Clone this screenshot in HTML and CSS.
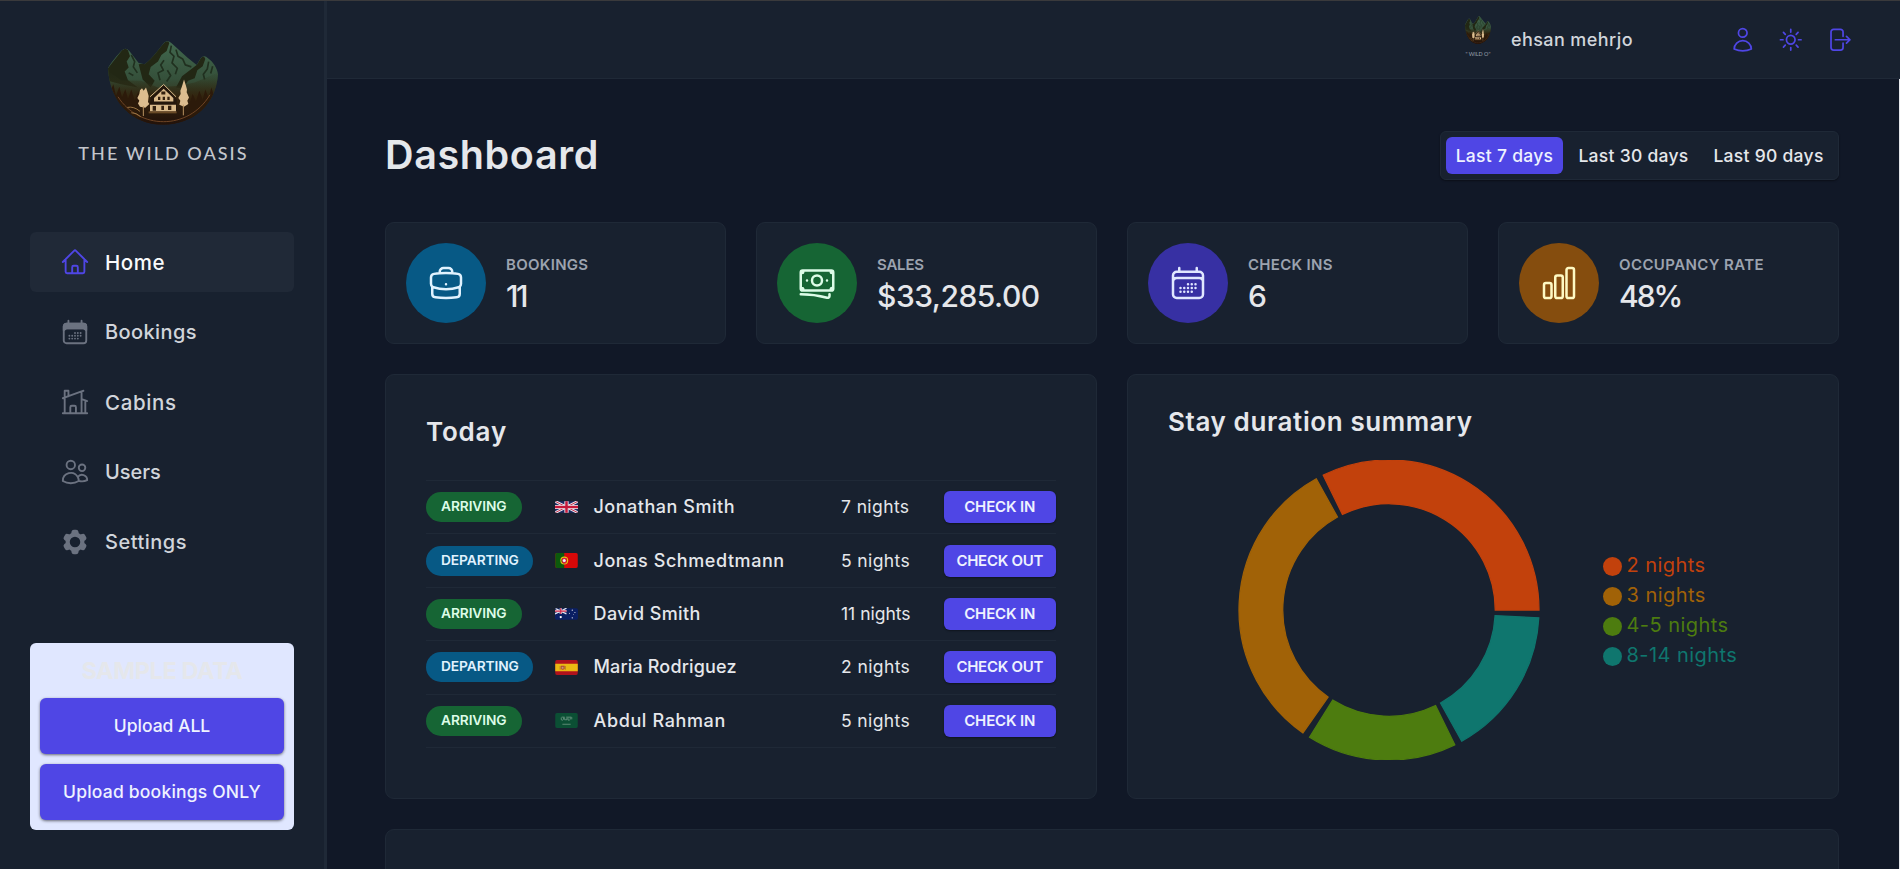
FILE: index.html
```html
<!DOCTYPE html>
<html lang="en">
<head>
<meta charset="utf-8">
<title>The Wild Oasis</title>
<link rel="stylesheet" href="styles.css">
</head>
<body>
<svg class="defs" aria-hidden="true">
  <defs>
    <linearGradient id="slope" x1="0" y1="0" x2="0" y2="1">
      <stop offset="0" stop-color="#41684f"/><stop offset=".45" stop-color="#35503a"/><stop offset=".75" stop-color="#33260f"/><stop offset="1" stop-color="#2a1408"/>
    </linearGradient>
    <linearGradient id="ground" x1="0" y1="0" x2="0" y2="1">
      <stop offset="0" stop-color="#2b3a22" stop-opacity="0"/><stop offset=".5" stop-color="#33220d"/><stop offset="1" stop-color="#22120a"/>
    </linearGradient>
    <clipPath id="bowl"><path d="M0 82C5 70 30 40 42 28Q53 18 64 30L92 66L110 70C135 52 155 20 170 4Q180-4 190 6L238 50L266 72L278 52Q288 40 300 52C315 62 328 82 330 100C325 190 255 252 165 252C75 252 5 185 0 82Z"/></clipPath>
    <symbol id="i-calendar" viewBox="0 0 24 24"><path d="M6.75 3v2.25M17.25 3v2.25M3 18.75V7.5a2.25 2.25 0 012.25-2.25h13.5A2.25 2.25 0 0121 7.5v11.25m-18 0A2.25 2.25 0 005.25 21h13.5A2.25 2.25 0 0021 18.75m-18 0v-7.5A2.25 2.25 0 015.25 9h13.5A2.25 2.25 0 0121 11.25v7.5m-9-6h.008v.008H12v-.008zM12 15h.008v.008H12V15zm0 2.25h.008v.008H12v-.008zM9.75 15h.008v.008H9.75V15zm0 2.25h.008v.008H9.75v-.008zM7.5 15h.008v.008H7.5V15zm0 2.25h.008v.008H7.5v-.008zm6.75-4.5h.008v.008h-.008v-.008zm0 2.25h.008v.008h-.008V15zm0 2.25h.008v.008h-.008v-.008zm2.25-4.5h.008v.008H16.5v-.008zm0 2.25h.008v.008H16.5V15z"/></symbol>
    <symbol id="art" viewBox="0 0 330 253" preserveAspectRatio="none">
      <g clip-path="url(#bowl)">
        <rect width="330" height="253" fill="url(#slope)"/>
        <path fill="#222714" d="M0 82L42 28Q53 18 60 28L66 46L56 62L62 80L50 92L60 118L90 140L40 130L0 120Z"/>
        <path fill="#222714" d="M92 70L110 68L170 4Q180-4 184 6L176 30L160 42L150 62L128 78L122 100L140 120L128 140L104 116Z"/>
        <path fill="#222714" d="M204 140L222 106L266 72L278 52Q288 40 292 54L284 76L268 88L260 112L240 120L226 142Z"/>
        <g fill="none" stroke="#20301f" stroke-width="5" stroke-linejoin="round">
          <path d="M190 14L186 34L198 46L192 66L208 82L202 100"/><path d="M204 26L210 46L224 54L232 72L250 78"/><path d="M168 58L158 72L166 88L150 96L156 118"/><path d="M178 88L188 104L176 122"/><path d="M70 42L80 62L76 78L88 96"/><path d="M62 96L76 104"/><path d="M302 62L298 84L286 100L290 116"/><path d="M314 76L308 98"/>
        </g>
        <path fill="url(#ground)" d="M0 90L40 118L100 120L150 140L210 135L260 125L330 95V253H0Z"/>
        <path fill="#2c1a0a" d="M0 110L8 150L16 130L24 166L34 138L42 170L52 145L60 175L70 146L80 180L92 150V253H0ZM330 115L318 165L310 140L302 172L292 146L284 178L274 150L264 182L254 160L244 190V253H330Z"/>
        <path fill="none" stroke="#6e4526" stroke-width="3" d="M30 168C92 266 240 272 306 162"/>
        <path fill="none" stroke="#9b7444" stroke-width="3" d="M58 200Q78 196 96 212M70 216Q86 216 98 228"/>
      </g>
      <path fill="#24170c" d="M128 172L167 132L206 176L206 218H124Z"/>
      <path fill="#d9b98a" d="M138 172L167 144L196 172V182H138ZM126 192H204V212H126Z"/>
      <path fill="#33200f" d="M160 152h12v9h-12zM150 168h7v10h-7zM164 168h7v10h-7zM178 168h7v10h-7zM134 196h10v14h-10zM160 195h8v13h-8zM180 195h10v13h-10z"/>
      <path fill="none" stroke="#d9b98a" stroke-width="3" d="M126 168L167 131L204 168"/>
      <path fill="#6a4a26" d="M122 212H206V218H122Z"/>
      <path fill="#dcbd8f" d="M102 142L107 150L114 140L118 152L122 166L120 184L124 190L112 201L96 198L90 188L94 180L88 172L94 160L96 148ZM228 116L233 132L237 146L236 154L243 170L238 180L241 190L228 198L214 192L217 180L211 172L218 160L217 150L222 136Z"/>
      <path stroke="#ba935f" stroke-width="3" d="M106 196V226M226 192V224"/>
    </symbol>
  </defs>
</svg>

<div class="app">
  <aside class="sidebar">
    <div class="logo">
      <svg class="logo-art"><use href="#art"/></svg>
      <div class="logo-name">THE WILD OASIS</div>
    </div>
    <nav class="nav">
      <a class="nav-item active"><svg class="icon" viewBox="0 0 24 24"><path d="m2.25 12 8.954-8.955c.44-.439 1.152-.439 1.591 0L21.75 12M4.5 9.75v10.125c0 .621.504 1.125 1.125 1.125H9.75v-4.875c0-.621.504-1.125 1.125-1.125h2.25c.621 0 1.125.504 1.125 1.125V21h4.125c.621 0 1.125-.504 1.125-1.125V9.75M8.25 21h8.25"/></svg><span class="t-home">Home</span></a>
      <a class="nav-item"><svg class="icon" viewBox="0 0 24 24"><path fill="currentColor" d="M3 10.5V7.5a2.25 2.25 0 012.25-2.25h13.5A2.25 2.25 0 0121 7.5v3L18.75 9H5.25z"/><use href="#i-calendar"/></svg><span class="t-bookings">Bookings</span></a>
      <a class="nav-item"><svg class="icon" viewBox="0 0 24 24"><path d="M8.25 21v-4.875c0-.621.504-1.125 1.125-1.125h2.25c.621 0 1.125.504 1.125 1.125V21m0 0h4.5V3.545M12.75 21h7.5V10.75M2.25 21h1.5m18 0h-18M2.25 9l4.5-1.636M18.75 3l-1.5.545m0 6.205l3 1m1.5.5l-1.5-.5M6.75 7.364V3h-3v18m3-13.636l10.5-3.819"/></svg><span class="t-cabins">Cabins</span></a>
      <a class="nav-item"><svg class="icon" viewBox="0 0 24 24"><path d="M15 19.128a9.38 9.38 0 002.625.372 9.337 9.337 0 004.121-.952 4.125 4.125 0 00-7.533-2.493M15 19.128v-.003c0-1.113-.285-2.16-.786-3.07M15 19.128v.106A12.318 12.318 0 018.624 21c-2.331 0-4.512-.645-6.374-1.766l-.001-.109a6.375 6.375 0 0111.964-3.07M12 6.375a3.375 3.375 0 11-6.75 0 3.375 3.375 0 016.75 0zm8.25 2.25a2.625 2.625 0 11-5.25 0 2.625 2.625 0 015.25 0z"/></svg><span class="t-users">Users</span></a>
      <a class="nav-item"><svg class="icon solid" viewBox="0 0 24 24"><path fill-rule="evenodd" d="M11.078 2.25c-.917 0-1.699.663-1.85 1.567L9.05 4.889c-.02.12-.115.26-.297.348a7.493 7.493 0 00-.986.57c-.166.115-.334.126-.45.083L6.3 5.508a1.875 1.875 0 00-2.282.819l-.922 1.597a1.875 1.875 0 00.432 2.385l.84.692c.095.078.17.229.154.43a7.598 7.598 0 000 1.139c.015.2-.059.352-.153.43l-.841.692a1.875 1.875 0 00-.432 2.385l.922 1.597a1.875 1.875 0 002.282.818l1.019-.382c.115-.043.283-.031.45.082.312.214.641.405.985.57.182.088.277.228.297.35l.178 1.071c.151.904.933 1.567 1.85 1.567h1.844c.916 0 1.699-.663 1.85-1.567l.178-1.072c.02-.12.114-.26.297-.349.344-.165.673-.356.985-.57.167-.114.335-.125.45-.082l1.02.382a1.875 1.875 0 002.28-.819l.923-1.597a1.875 1.875 0 00-.432-2.385l-.84-.692c-.095-.078-.17-.229-.154-.43a7.614 7.614 0 000-1.139c-.016-.2.059-.352.153-.43l.84-.692c.708-.582.891-1.59.433-2.385l-.922-1.597a1.875 1.875 0 00-2.282-.818l-1.02.382c-.114.043-.282.031-.449-.083a7.49 7.49 0 00-.985-.57c-.183-.087-.277-.227-.297-.348l-.179-1.072a1.875 1.875 0 00-1.85-1.567h-1.843zM12 16.2a4.2 4.2 0 100-8.4 4.2 4.2 0 000 8.4z"/></svg><span class="t-settings">Settings</span></a>
    </nav>
    <div class="uploader">
      <h3>SAMPLE DATA</h3>
      <button class="btn-large">Upload ALL</button>
      <button class="btn-large bookings-only">Upload bookings ONLY</button>
    </div>
  </aside>

  <div class="page">
    <header class="topbar">
      <div class="avatar"><svg class="avatar-art"><use href="#art"/></svg><span class="avatar-name">" WILD O"</span></div>
      <span class="username">ehsan mehrjo</span>
      <div class="actions">
        <svg class="icon" viewBox="0 0 24 24"><path d="M15.75 6a3.75 3.75 0 11-7.5 0 3.75 3.75 0 017.5 0zM4.501 20.118a7.5 7.5 0 0114.998 0A17.933 17.933 0 0112 21.75c-2.676 0-5.216-.584-7.499-1.632z"/></svg>
        <svg class="icon" viewBox="0 0 24 24"><path d="M12 3v2.25m6.364.386l-1.591 1.591M21 12h-2.25m-.386 6.364l-1.591-1.591M12 18.75V21m-4.773-4.227l-1.591 1.591M5.25 12H3m4.227-4.773L5.636 5.636M15.75 12a3.75 3.75 0 11-7.5 0 3.75 3.75 0 017.5 0z"/></svg>
        <svg class="icon" viewBox="0 0 24 24"><path d="M15.75 9V5.25A2.25 2.25 0 0013.5 3h-6a2.25 2.25 0 00-2.25 2.25v13.5A2.25 2.25 0 007.5 21h6a2.25 2.25 0 002.25-2.25V15m3 0l3-3m0 0l-3-3m3 3H9"/></svg>
      </div>
    </header>

    <main class="main">
      <div class="heading">
        <h1>Dashboard</h1>
        <div class="filter">
          <button class="on">Last 7 days</button><button>Last 30 days</button><button>Last 90 days</button>
        </div>
      </div>

      <div class="stats">
        <section class="stat">
          <div class="disc blue"><svg class="icon" viewBox="0 0 24 24"><path d="M20.25 14.15v4.25c0 1.094-.787 2.036-1.872 2.18-2.087.277-4.216.42-6.378.42s-4.291-.143-6.378-.42c-1.085-.144-1.872-1.086-1.872-2.18v-4.25m16.5 0a2.18 2.18 0 00.75-1.661V8.706c0-1.081-.768-2.015-1.837-2.175a48.114 48.114 0 00-3.413-.387m4.5 8.006c-.194.165-.42.295-.673.38A23.978 23.978 0 0112 15.75c-2.648 0-5.195-.429-7.577-1.22a2.016 2.016 0 01-.673-.38m0 0A2.18 2.18 0 013 12.489V8.706c0-1.081.768-2.015 1.837-2.175a48.111 48.111 0 013.413-.387m7.5 0V5.25A2.25 2.25 0 0013.5 3h-3a2.25 2.25 0 00-2.25 2.25v.894m7.5 0a48.667 48.667 0 00-7.5 0M12 12.75h.008v.008H12v-.008z"/></svg></div>
          <div><h5>BOOKINGS</h5><p class="v-eleven">11</p></div>
        </section>
        <section class="stat">
          <div class="disc green"><svg class="icon" viewBox="0 0 24 24"><path d="M2.25 18.75a60.07 60.07 0 0115.797 2.101c.727.198 1.453-.342 1.453-1.096V18.75M3.75 4.5v.75A.75.75 0 013 6h-.75m0 0v-.375c0-.621.504-1.125 1.125-1.125H20.25M2.25 6v9m18-10.5v.75c0 .414.336.75.75.75h.75m-1.5-1.5h.375c.621 0 1.125.504 1.125 1.125v9.75c0 .621-.504 1.125-1.125 1.125h-.375m1.5-1.5H21a.75.75 0 00-.75.75v.75m0 0H3.75m0 0h-.375a1.125 1.125 0 01-1.125-1.125V15m1.5 1.5v-.75A.75.75 0 003 15h-.75M15 10.5a3 3 0 11-6 0 3 3 0 016 0zm3 0h.008v.008H18V10.5zm-12 0h.008v.008H6V10.5z"/></svg></div>
          <div><h5 class="s-sales">SALES</h5><p class="v-sales">$33,285.00</p></div>
        </section>
        <section class="stat">
          <div class="disc indigo"><svg class="icon" viewBox="0 0 24 24"><use href="#i-calendar"/></svg></div>
          <div><h5>CHECK INS</h5><p>6</p></div>
        </section>
        <section class="stat">
          <div class="disc yellow"><svg class="icon" viewBox="0 0 24 24"><path d="M3 13.125C3 12.504 3.504 12 4.125 12h2.25c.621 0 1.125.504 1.125 1.125v6.75C7.5 20.496 6.996 21 6.375 21h-2.25A1.125 1.125 0 013 19.875v-6.75zM9.75 8.625c0-.621.504-1.125 1.125-1.125h2.25c.621 0 1.125.504 1.125 1.125v11.25c0 .621-.504 1.125-1.125 1.125h-2.25a1.125 1.125 0 01-1.125-1.125V8.625zM16.5 4.125c0-.621.504-1.125 1.125-1.125h2.25C20.496 3 21 3.504 21 4.125v15.75c0 .621-.504 1.125-1.125 1.125h-2.25a1.125 1.125 0 01-1.125-1.125V4.125z"/></svg></div>
          <div><h5 class="s-occupancy">OCCUPANCY RATE</h5><p class="v-rate">48%</p></div>
        </section>
      </div>

      <div class="panels">
        <section class="panel today">
          <h2>Today</h2>
          <ul>
            <li><span class="tag arriving">ARRIVING</span>
              <svg class="flag" viewBox="0 0 60 30" height="12"><path fill="#1c2a63" d="M0 0h60v30H0z"/><path stroke="#e8e8ee" stroke-width="7" d="M0 0l60 30M60 0L0 30"/><path stroke="#c8304a" stroke-width="2.5" d="M0 0l60 30M60 0L0 30"/><path stroke="#f0eef0" stroke-width="11" d="M30 0v30M0 15h60"/><path stroke="#c5183a" stroke-width="6.5" d="M30 0v30M0 15h60"/></svg>
              <span class="guest jonathan">Jonathan Smith</span><span class="nights">7 nights</span><button>CHECK IN</button></li>
            <li><span class="tag departing">DEPARTING</span>
              <svg class="flag" viewBox="0 0 60 40" height="15"><path fill="#d80808" d="M0 0h60v40H0z"/><path fill="#0c5a0c" d="M0 0h24v40H0z"/><circle cx="24" cy="20" r="9" fill="none" stroke="#e3c414" stroke-width="3"/><path fill="#d8203a" d="M18 13h12v8q0 7-6 7t-6-7z"/><circle cx="24" cy="20" r="4" fill="#eef"/></svg>
              <span class="guest jonas">Jonas Schmedtmann</span><span class="nights">5 nights</span><button class="out">CHECK OUT</button></li>
            <li><span class="tag arriving">ARRIVING</span>
              <svg class="flag" viewBox="0 0 60 30" height="12"><path fill="#0b1f63" d="M0 0h60v30H0z"/><path stroke="#e6e6f0" stroke-width="3.5" d="M0 0l30 15M30 0L0 15"/><path stroke="#eee" stroke-width="5.5" d="M15 0v15M0 7.5h30"/><path stroke="#cc1f45" stroke-width="3" d="M15 0v15M0 7.5h30"/><g fill="#fff"><circle cx="15" cy="23" r="3"/><circle cx="38" cy="13" r="1.3"/><circle cx="45" cy="5" r="1.5"/><circle cx="52" cy="11" r="1.3"/><circle cx="45" cy="25" r="1.6"/><circle cx="48" cy="16" r="1"/></g></svg>
              <span class="guest david">David Smith</span><span class="nights eleven">11 nights</span><button>CHECK IN</button></li>
            <li><span class="tag departing">DEPARTING</span>
              <svg class="flag" viewBox="0 0 60 40" height="15"><path fill="#b0121c" d="M0 0h60v40H0z"/><path fill="#eab913" d="M0 10h60v20H0z"/><path fill="#b0452c" d="M15 15h10v9q-5 4-10 0z"/><path fill="#c79c7a" d="M17 18h5v5h-5z"/><path stroke="#9a5a2a" stroke-width="1.5" d="M13 16v10M27 16v10"/></svg>
              <span class="guest maria">Maria Rodriguez</span><span class="nights">2 nights</span><button class="out">CHECK OUT</button></li>
            <li><span class="tag arriving">ARRIVING</span>
              <svg class="flag" viewBox="0 0 60 40" height="15"><path fill="#0b4f34" d="M0 0h60v40H0z"/><path fill="none" stroke="#8fb0a0" stroke-width="1.6" d="M16 12v6q3 3 6-1v-5m3 0v6h6v-5m3-1v7q4 1 6-2v-5m4-1v6M17 11h8m4 0h14M19 30h22"/></svg>
              <span class="guest abdul">Abdul Rahman</span><span class="nights">5 nights</span><button>CHECK IN</button></li>
          </ul>
        </section>

        <section class="panel durations">
          <h2>Stay duration summary</h2>
          <div class="chart">
            <svg class="donut" viewBox="-151 -150 302 300">
              <path class="c2" d="M150 0A150 150 0 0 0 -65.76 -134.82L-46.58 -95.5A106.25 106.25 0 0 1 106.25 0Z"/>
              <path class="c3" d="M-72.72 -131.19A150 150 0 0 0 -86.04 122.87L-60.94 87.03A106.25 106.25 0 0 1 -51.51 -92.93Z"/>
              <path class="c5" d="M-79.49 127.21A150 150 0 0 0 65.76 134.82L46.58 95.5A106.25 106.25 0 0 1 -56.3 90.11Z"/>
              <path class="c14" d="M72.72 131.19A150 150 0 0 0 149.79 7.85L106.1 5.56A106.25 106.25 0 0 1 51.51 92.93Z"/>
            </svg>
            <ul class="legend">
              <li class="c2"><i></i><span>2 nights</span></li>
              <li class="c3"><i></i><span>3 nights</span></li>
              <li class="c5"><i></i><span>4-5 nights</span></li>
              <li class="c14"><i></i><span>8-14 nights</span></li>
            </ul>
          </div>
        </section>
      </div>

      <section class="panel sales"></section>
    </main>
  </div>
</div>
</body>
</html>
```

FILE: styles.css
```css
* { box-sizing: border-box; margin: 0; padding: 0; }
body {
  height: 869px;
  overflow: hidden;
  border-top: 1px solid #3a3a3c;
  background: #111827;
  color: #e5e7eb;
  font-family: Inter, "Liberation Sans", sans-serif;
}
ul { list-style: none; }
button { border: 0; font: inherit; color: inherit; white-space: nowrap; }
.defs { position: absolute; width: 0; height: 0; }
.icon { fill: none; stroke: currentColor; stroke-width: 1.5; stroke-linecap: round; stroke-linejoin: round; flex: none; }
.icon.solid { fill: currentColor; stroke: none; }

.app { display: grid; grid-template-columns: 327px 1fr; height: 868px; }

/* Sidebar */
.sidebar { background: #18212f; border-right: 3px solid #1f2937; padding: 40px 30px 0; display: flex; flex-direction: column; }
.logo { height: 126px; display: flex; flex-direction: column; align-items: center; }
.logo-art { width: 110px; height: 84px; flex: none; display: block; margin-left: 2px; }
.logo-name { margin-top: 15.5px; font: 500 18px/24px Lato, sans-serif; letter-spacing: 2.05px; padding-left: 3px; color: #c3c6cc; white-space: nowrap; }
.nav { margin-top: 65px; display: flex; flex-direction: column; gap: 10px; }
.nav-item { height: 60px; padding: 0 30px; display: flex; align-items: center; gap: 15px; border-radius: 6px; font-size: 20px; font-weight: 500; color: #d1d5db; }
.nav-item .icon { width: 30px; height: 30px; color: #6b7280; }
.nav-item.active { background: #202937; color: #f9fafb; }
.nav-item.active .icon { color: #4f46e5; }
.t-home { font-size: 20.5px; letter-spacing: .55px; }
.t-bookings { letter-spacing: .4px; }
.t-cabins { font-size: 20.5px; letter-spacing: .65px; }
.t-settings { letter-spacing: .5px; }
.uploader { margin-top: 71px; height: 187px; padding: 10px; border-radius: 6px; background: #e0e7ff; display: flex; flex-direction: column; gap: 10px; }
.uploader h3 { height: 35px; font-size: 23.5px; line-height: 35px; font-weight: 700; text-align: center; letter-spacing: -.4px; }
.btn-large { height: 56px; padding-bottom: 2px; border-radius: 6px; background: #4f46e5; color: #eef2ff; font-size: 17.5px; font-weight: 500; box-shadow: 0 1px 3px rgba(0, 0, 0, .55); }
.bookings-only { letter-spacing: .2px; }

/* Top bar */
.page { min-width: 0; overflow: hidden; }
.topbar { height: 78px; background: #18212f; border-bottom: 1px solid #1f2937; display: flex; align-items: center; justify-content: flex-end; padding-right: 48px; color: #d1d5db; }
.avatar { width: 26px; height: 45px; margin-right: 20px; display: flex; flex-direction: column; justify-content: space-between; align-items: center; padding-bottom: 5px; }
.avatar-art { width: 26px; height: 28px; margin-top: -1px; }
.avatar-name { font: 5.4px/6px Lato, sans-serif; white-space: nowrap; color: #9ca3af; }
.username { width: 122px; margin-right: 96px; font-size: 18px; font-weight: 500; letter-spacing: .42px; white-space: nowrap; }
.actions { display: flex; gap: 20.3px; color: #4f46e5; }
.actions .icon { width: 27.5px; height: 27.5px; }

/* Content */
.main { height: 790px; overflow: hidden; border-right: 1px solid #e6e8ec; padding: 52px 60px 0 58px; }
.heading { height: 49px; display: flex; justify-content: space-between; align-items: center; }
.heading h1 { font-size: 39.5px; line-height: 48px; margin-top: -2px; font-weight: 600; letter-spacing: .62px; }
.filter { width: 399px; height: 49px; padding: 5px; display: flex; gap: 6px; background: #18212f; border: 1px solid #1f2937; border-radius: 6px; box-shadow: 0 1px 2px rgba(0, 0, 0, .4); }
.filter button { width: 129px; padding-bottom: 1px; background: none; border-radius: 6px; font-size: 17.5px; font-weight: 500; letter-spacing: .28px; }
.filter .on { width: 117px; background: #4f46e5; color: #eef2ff; }

.stats { margin-top: 42px; display: grid; grid-template-columns: repeat(4, 1fr); gap: 30px; }
.stat { height: 122px; padding: 20px; display: flex; align-items: center; gap: 20px; background: #18212f; border: 1px solid #1f2937; border-radius: 9px; }
.disc { width: 80px; height: 80px; border-radius: 50%; display: grid; place-items: center; }
.disc .icon { width: 40px; height: 40px; }
.blue { background: #075985; color: #e0f2fe; }
.green { background: #166534; color: #dcfce7; }
.indigo { background: #3730a3; color: #e0e7ff; }
.yellow { background: #854d0e; color: #fef9c3; }
.stat h5 { font-size: 15px; line-height: 22px; font-weight: 600; color: #9ca3af; letter-spacing: .3px; margin-top: 4px; white-space: nowrap; }
.stat .s-sales { letter-spacing: -.2px; }
.stat .s-occupancy { letter-spacing: .4px; }
.stat p { font-size: 30px; line-height: 40px; font-weight: 500; white-space: nowrap; }
.stat .v-eleven { letter-spacing: -2.5px; }
.stat .v-sales { letter-spacing: -.5px; }
.stat .v-rate { letter-spacing: -2px; }

.panels { margin-top: 30px; display: grid; grid-template-columns: 1fr 1fr; gap: 30px; }
.panel { background: #18212f; border: 1px solid #1f2937; border-radius: 9px; }
.panels .panel { height: 425px; padding: 0 40px; }
.panel h2 { font-size: 26px; line-height: 38px; font-weight: 600; letter-spacing: .6px; white-space: nowrap; }
.today h2 { margin: 38px 0 29px; letter-spacing: .8px; }
.today ul { border-top: 1px solid #1f2937; }
.today li { height: 53.4px; border-bottom: 1px solid #1f2937; display: grid; grid-template-columns: 112.5px 25px 1fr 87.5px 112.5px; gap: 15px; align-items: center; font-size: 17.5px; white-space: nowrap; }
.tag { justify-self: start; height: 30px; padding: 0 15px; border-radius: 15px; font-size: 13.75px; line-height: 29px; font-weight: 600; letter-spacing: -.1px; }
.arriving { background: #166534; color: #dcfce7; width: 96px; }
.departing { background: #075985; color: #e0f2fe; width: 107px; }
.flag { width: 23px; margin-left: 1.5px; border-radius: 2px; overflow: hidden; }
.guest, .nights { padding-bottom: 1px; }
.guest { font-size: 18px; font-weight: 500; }
.jonathan { letter-spacing: .52px; }
.jonas { letter-spacing: .57px; }
.david { letter-spacing: .4px; }
.maria { letter-spacing: .15px; }
.abdul { letter-spacing: .63px; }
.nights { letter-spacing: .4px; }
.nights.eleven { letter-spacing: 0; }
.today button { height: 32px; padding-bottom: 1px; border-radius: 6px; background: #4f46e5; color: #eef2ff; font-size: 15px; font-weight: 600; letter-spacing: -.15px; box-shadow: 0 1px 2px rgba(0, 0, 0, .4); }
.today .out { letter-spacing: -.27px; }

.durations h2 { margin-top: 28px; }
.chart { margin-top: 19px; padding-left: 69.5px; display: flex; align-items: flex-start; gap: 63.5px; }
.donut { width: 302px; height: 300px; flex: none; overflow: hidden; stroke-width: 1.25; }
.legend { margin-top: 91px; font-size: 20px; line-height: 28px; white-space: nowrap; letter-spacing: .45px; }
.legend li { height: 30px; display: flex; align-items: center; gap: 4.5px; stroke: none; }
.legend span { padding-bottom: 2px; }
.legend i { width: 19px; height: 19px; border-radius: 50%; background: currentColor; }
.c2 { color: #c2410c; fill: #c2410c; stroke: #c2410c; }
.c3 { color: #a16207; fill: #a16207; stroke: #a16207; }
.c5 { color: #4d7c0f; fill: #4d7c0f; stroke: #4d7c0f; }
.c14 { color: #0f766e; fill: #0f766e; stroke: #0f766e; }
.sales { margin-top: 30px; height: 400px; }
```
